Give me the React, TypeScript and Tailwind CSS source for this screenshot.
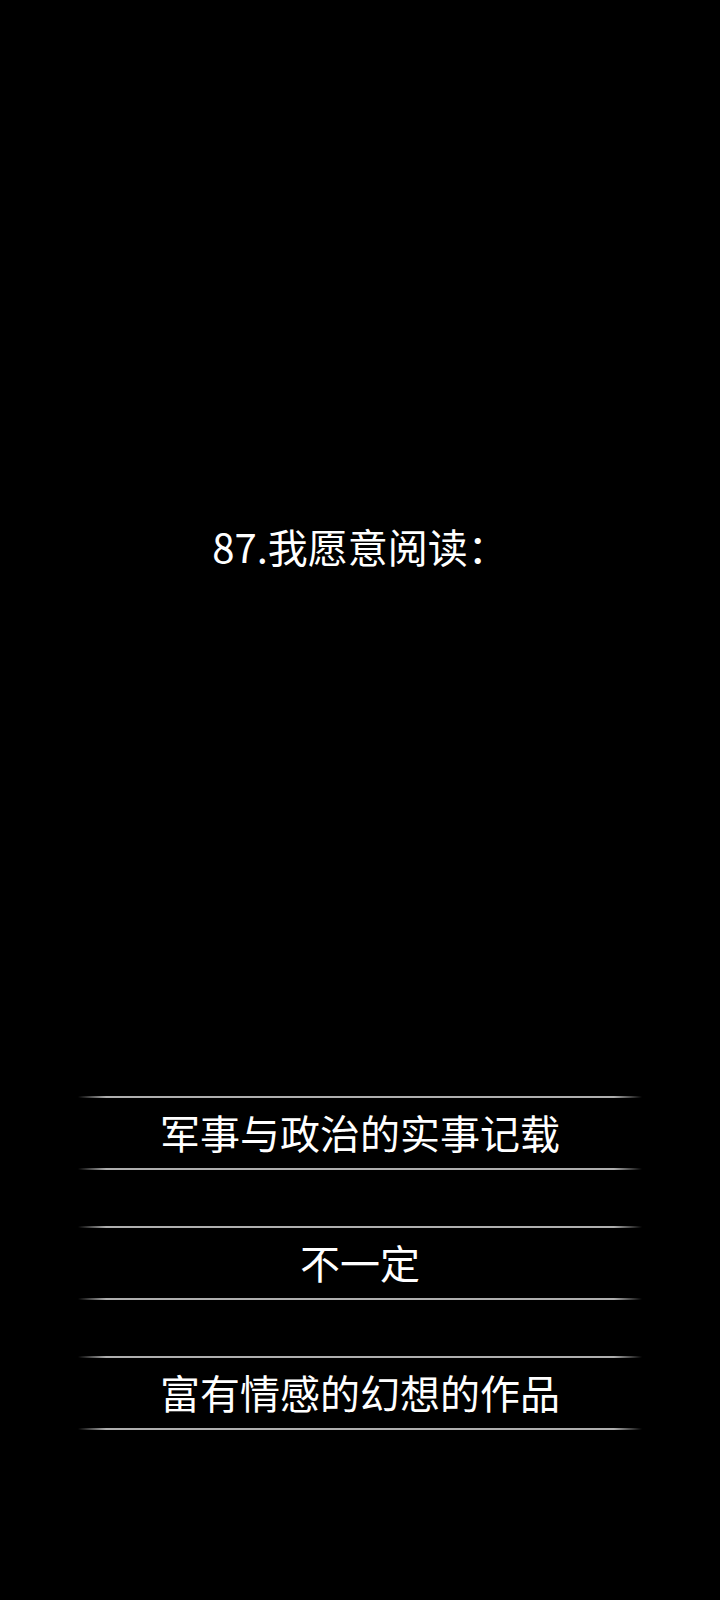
import React from "react";

const font = { fontFamily: '"Noto Sans CJK SC", "Noto Sans", sans-serif' };

function Line() {
  return (
    <div className="h-[2px] w-full bg-[linear-gradient(to_right,rgba(175,175,175,0)_0%,rgba(175,175,175,1)_5%,rgba(175,175,175,1)_95%,rgba(175,175,175,0)_100%)]" />
  );
}

function Option({ label }: { label: string }) {
  return (
    <div className="flex w-[564px] flex-col">
      <Line />
      <div className="flex h-[70px] items-center justify-center pb-[2px] text-[40px] leading-none text-white">
        {label}
      </div>
      <Line />
    </div>
  );
}

export default function App() {
  return (
    <div className="flex min-h-[1600px] w-full flex-col items-center bg-black" style={font}>
      <div className="mt-[520px] h-[52px] text-[40px] leading-[52px] text-white">87.我愿意阅读：</div>
      <div className="mt-[524px] flex flex-col items-center gap-[56px]">
        <Option label="军事与政治的实事记载" />
        <Option label="不一定" />
        <Option label="富有情感的幻想的作品" />
      </div>
    </div>
  );
}
